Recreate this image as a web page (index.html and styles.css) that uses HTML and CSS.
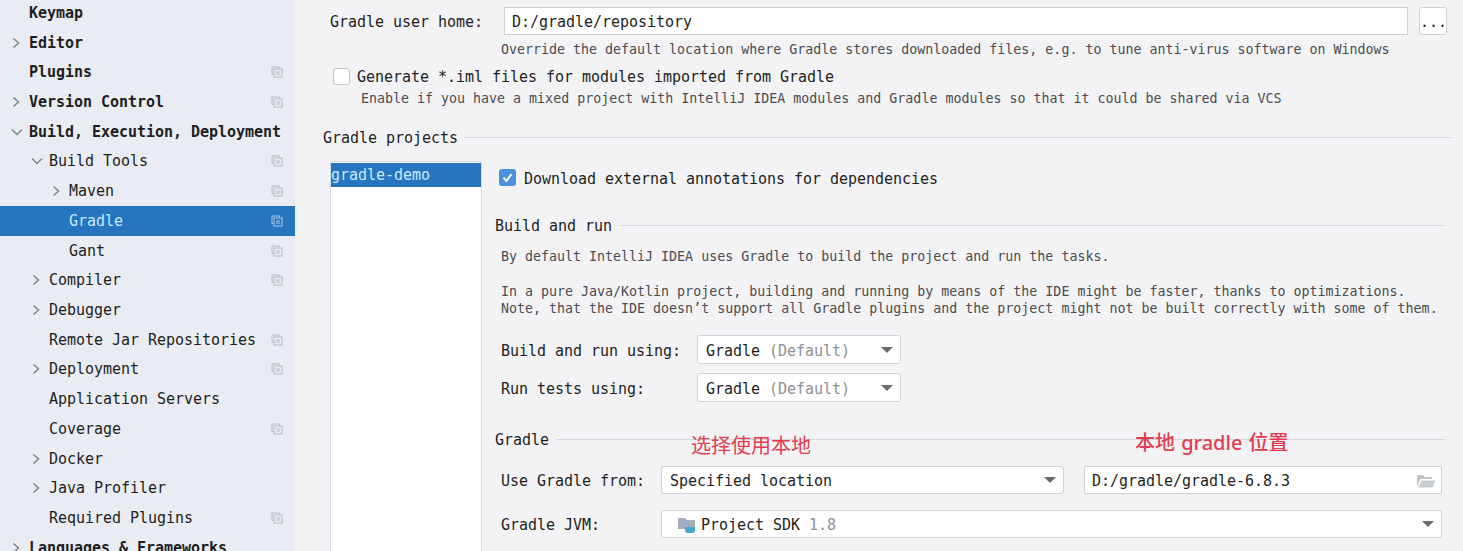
FILE: index.html
```html
<!DOCTYPE html>
<html lang="en">
<head>
<meta charset="UTF-8">
<meta name="viewport" content="width=device-width, initial-scale=1.0">
<title>Settings - Gradle</title>
<link rel="stylesheet" href="styles.css">
</head>
<body>

<svg class="defs" width="0" height="0">
    <symbol id="scope" viewBox="0 0 12 12">
        <path d="M2.5 8.5H1V1h7.5v1.5" fill="none" stroke="currentColor"/>
        <rect x="3" y="3" width="8" height="8" fill="none" stroke="currentColor"/>
        <path d="M5 6h4M5 8h4" stroke="currentColor"/>
    </symbol>
    <symbol id="right" viewBox="0 0 10 12">
        <path d="M2.5 1.5 7.5 6l-5 4.5" fill="none" stroke="currentColor" stroke-width="1.5"/>
    </symbol>
    <symbol id="down" viewBox="0 0 12 10">
        <path d="M1 2.5 6 7.5l5-5" fill="none" stroke="currentColor" stroke-width="1.5"/>
    </symbol>
</svg>

<div id="sidebar">
    <div class="row top"><span class="arrow"></span>Keymap</div>
    <div class="row top"><span class="arrow"><svg width="10" height="12"><use href="#right"/></svg></span>Editor</div>
    <div class="row top"><span class="arrow"></span>Plugins<svg class="scope" width="12" height="12"><use href="#scope"/></svg></div>
    <div class="row top"><span class="arrow"><svg width="10" height="12"><use href="#right"/></svg></span>Version Control<svg class="scope" width="12" height="12"><use href="#scope"/></svg></div>
    <div class="row top"><span class="arrow"><svg width="12" height="10"><use href="#down"/></svg></span>Build, Execution, Deployment</div>
    <div class="row depth1"><span class="arrow"><svg width="12" height="10"><use href="#down"/></svg></span>Build Tools<svg class="scope" width="12" height="12"><use href="#scope"/></svg></div>
    <div class="row depth2"><span class="arrow"><svg width="10" height="12"><use href="#right"/></svg></span>Maven<svg class="scope" width="12" height="12"><use href="#scope"/></svg></div>
    <div class="row depth2 selected"><span class="arrow"></span>Gradle<svg class="scope" width="12" height="12"><use href="#scope"/></svg></div>
    <div class="row depth2"><span class="arrow"></span>Gant<svg class="scope" width="12" height="12"><use href="#scope"/></svg></div>
    <div class="row depth1"><span class="arrow"><svg width="10" height="12"><use href="#right"/></svg></span>Compiler<svg class="scope" width="12" height="12"><use href="#scope"/></svg></div>
    <div class="row depth1"><span class="arrow"><svg width="10" height="12"><use href="#right"/></svg></span>Debugger</div>
    <div class="row depth1"><span class="arrow"></span>Remote Jar Repositories<svg class="scope" width="12" height="12"><use href="#scope"/></svg></div>
    <div class="row depth1"><span class="arrow"><svg width="10" height="12"><use href="#right"/></svg></span>Deployment<svg class="scope" width="12" height="12"><use href="#scope"/></svg></div>
    <div class="row depth1"><span class="arrow"></span>Application Servers</div>
    <div class="row depth1"><span class="arrow"></span>Coverage<svg class="scope" width="12" height="12"><use href="#scope"/></svg></div>
    <div class="row depth1"><span class="arrow"><svg width="10" height="12"><use href="#right"/></svg></span>Docker</div>
    <div class="row depth1"><span class="arrow"><svg width="10" height="12"><use href="#right"/></svg></span>Java Profiler</div>
    <div class="row depth1"><span class="arrow"></span>Required Plugins<svg class="scope" width="12" height="12"><use href="#scope"/></svg></div>
    <div class="row top"><span class="arrow"><svg width="10" height="12"><use href="#right"/></svg></span>Languages &amp; Frameworks</div>
</div>

<div id="main">
    <div class="homeRow">
        <div class="homeLabel label">Gradle user home:</div>
        <div class="field homeField">D:/gradle/repository</div>
        <div class="browseBtn">...</div>
    </div>
    <div class="hint homeHint">Override the default location where Gradle stores downloaded files, e.g. to tune anti-virus software on Windows</div>

    <div class="checkRow imlRow">
        <span class="checkbox"></span>
        <span class="label">Generate *.iml files for modules imported from Gradle</span>
    </div>
    <div class="hint imlHint">Enable if you have a mixed project with IntelliJ IDEA modules and Gradle modules so that it could be shared via VCS</div>

    <div class="sectionTitle projectsTitle">Gradle projects</div>

    <div class="projects">
        <div class="projectList">
            <div class="projectItem">gradle-demo</div>
        </div>

        <div class="detail">
            <div class="checkRow downloadRow">
                <span class="checkbox checked">
                    <svg width="17" height="17" viewBox="0 0 17 17"><path d="M4.5 8.5 7.5 12l5-7" fill="none" stroke="#fff" stroke-width="2"/></svg>
                </span>
                <span class="label">Download external annotations for dependencies</span>
            </div>

            <div class="sectionTitle buildTitle">Build and run</div>
            <div class="hint buildText">By default IntelliJ IDEA uses Gradle to build the project and run the tasks.<br><br>In a pure Java/Kotlin project, building and running by means of the IDE might be faster, thanks to optimizations.<br>Note, that the IDE doesn&rsquo;t support all Gradle plugins and the project might not be built correctly with some of them.</div>

            <div class="buildForm">
                <div class="label">Build and run using:</div>
                <div class="select tall">Gradle&nbsp;<span class="muted">(Default)</span><span class="caret"></span></div>
                <div class="label">Run tests using:</div>
                <div class="select tall">Gradle&nbsp;<span class="muted">(Default)</span><span class="caret"></span></div>
            </div>

            <div class="sectionTitle gradleTitle">Gradle</div>

            <div class="gradleForm">
                <div class="label">Use Gradle from:</div>
                <div class="select">Specified location<span class="caret"></span></div>
                <div class="field pathField">D:/gradle/gradle-6.8.3
                    <svg class="openFolder" width="20" height="14" viewBox="0 0 20 14"><path d="M1 13V1h6l2 2h7v2H4.5L1 13Z" fill="#c2c6cc"/><path d="M5.5 6.5H19.5L16.5 13.5H2.5Z" fill="#c9cdd2"/></svg>
                </div>
                <div class="label">Gradle JVM:</div>
                <div class="select jvm">
                    <svg class="sdkIcon" width="18" height="18" viewBox="0 0 18 18"><path d="M0 2h7l2 2h8v9H0Z" fill="#a3afbc"/><path d="M7 11h10v3a3 3 0 0 1-3 3h-4a3 3 0 0 1-3-3Z" fill="#3fa9d0"/></svg>
                    Project SDK&nbsp;<span class="muted">1.8</span><span class="caret"></span>
                </div>
            </div>
        </div>
    </div>

    <div class="note noteLocal">选择使用本地</div>
    <div class="note notePath">本地 gradle 位置</div>
</div>

</body>
</html>
```

FILE: styles.css
```css
body {
    margin: 0;
    height: 551px;
    overflow: hidden;
    display: flex;
    background-color: #f3f3f6;
    color: #1e1e1e;
    font-family: "DejaVu Sans Mono", "Liberation Mono", monospace;
    font-size: 15px;
    letter-spacing: -0.03px;
}
.defs {
    position: absolute;
}
/* DejaVu sits a pixel higher than the IDE font */
.label {
    padding-top: 2px;
}

/* Left tree */
#sidebar {
    width: 295px;
    flex-shrink: 0;
    margin-top: -2px;
    background-color: #e9ecf3;
}
.row {
    display: flex;
    align-items: center;
    height: 29.72px;
    white-space: nowrap;
}
.row.top {
    padding-left: 9px;
    font-weight: bold;
}
.row.depth1 {
    padding-left: 29px;
}
.row.depth2 {
    padding-left: 49px;
}
.row.selected {
    background-color: #2675bf;
    color: #c8e8ff;
}
.arrow {
    width: 20px;
    flex-shrink: 0;
    display: flex;
    padding-left: 2px;
    box-sizing: border-box;
    color: #80858c;
}
.scope {
    margin-left: auto;
    margin-right: 12px;
    color: #b4bac2;
}
.row.selected .scope {
    color: #a9c8e6;
}

/* Right side */
#main {
    flex: 1;
    min-width: 0;
    position: relative;
    padding-right: 12px;
}
.homeRow {
    display: flex;
    align-items: center;
    margin-top: 7px;
    margin-left: 35px;
    margin-right: 4px;
}
.homeLabel {
    width: 174px;
    flex-shrink: 0;
}
.field {
    height: 28px;
    box-sizing: border-box;
    display: flex;
    align-items: center;
    padding-left: 7px;
    padding-top: 2px;
    background-color: white;
    border: 1px solid #cfcfd4;
    white-space: nowrap;
}
.homeField {
    flex: 1;
    min-width: 0;
}
.browseBtn {
    width: 28px;
    height: 28px;
    flex-shrink: 0;
    margin-left: 11px;
    box-sizing: border-box;
    text-align: center;
    line-height: 28px;
    background-color: white;
    border: 1px solid #cfcfd4;
    border-radius: 3px;
}
.hint {
    font-size: 13.3px;
    letter-spacing: 0;
    color: #4c4c50;
    white-space: nowrap;
}
.homeHint {
    margin-top: 6px;
    margin-left: 206px;
    line-height: 18px;
}
.checkRow {
    display: flex;
    align-items: center;
    white-space: nowrap;
}
.imlRow {
    margin-top: 8px;
    margin-left: 38px;
    height: 18px;
}
.checkbox {
    width: 17px;
    height: 17px;
    flex-shrink: 0;
    margin-right: 7px;
    box-sizing: border-box;
    background-color: white;
    border: 1px solid #c4c4c8;
    border-radius: 3px;
}
.checkbox.checked {
    margin-right: 8px;
    background-color: #4a90dc;
    border: none;
}
.checkbox.checked svg {
    display: block;
}
.imlHint {
    margin-top: 5px;
    margin-left: 66px;
    line-height: 18px;
}
.sectionTitle {
    display: flex;
    align-items: center;
    gap: 7px;
    height: 18px;
    white-space: nowrap;
}
.sectionTitle::after {
    content: "";
    flex: 1;
    height: 1px;
    margin-bottom: 2px;
    background-color: #d6d6dc;
}
.projectsTitle {
    margin-top: 21px;
    margin-left: 28px;
}

/* Project list and its details */
.projects {
    display: flex;
    margin-top: 14px;
    margin-left: 35px;
    height: 391px;
}
.projectList {
    width: 152px;
    flex-shrink: 0;
    box-sizing: border-box;
    padding-top: 1px;
    background-color: white;
    border: 1px solid #d3dbe3;
    border-bottom: none;
}
.projectItem {
    height: 24px;
    line-height: 24px;
    background-color: #2675bf;
    color: #c8e8ff;
}
.detail {
    flex: 1;
    min-width: 0;
    margin-left: 13px;
    margin-right: 6px;
}
.downloadRow {
    margin-top: 8px;
    margin-left: 4px;
    height: 17px;
}
.buildTitle {
    margin-top: 31px;
}
.buildText {
    margin-top: 13px;
    margin-left: 6px;
    line-height: 17.4px;
}
.buildForm {
    display: grid;
    grid-template-columns: 196px 204px;
    align-items: center;
    row-gap: 9px;
    margin-top: 17.4px;
    margin-left: 6px;
}
.select {
    height: 28px;
    box-sizing: border-box;
    display: flex;
    align-items: center;
    padding-left: 8px;
    padding-top: 2px;
    background-color: white;
    border: 1px solid #d2d2d8;
    border-radius: 3px;
    white-space: nowrap;
}
.select.tall {
    height: 29px;
}
.muted {
    color: #8f8f94;
}
.caret {
    margin-left: auto;
    margin-right: 7px;
    margin-bottom: 2px;
    width: 0;
    height: 0;
    border-left: 6px solid transparent;
    border-right: 6px solid transparent;
    border-top: 6px solid #6a6a70;
}
.gradleTitle {
    margin-top: 29px;
}
.gradleForm {
    display: grid;
    grid-template-columns: 160px 403px 378px;
    align-items: center;
    row-gap: 16px;
    margin-top: 17px;
    margin-left: 6px;
}
.pathField {
    justify-content: space-between;
    margin-left: 20px;
    padding-right: 5px;
    border-radius: 2px;
}
.jvm {
    grid-column: 2 / 4;
    padding-left: 16px;
}
.sdkIcon {
    margin-right: 5px;
    flex-shrink: 0;
}

/* Red notes drawn on top of the screenshot */
.note {
    position: absolute;
    font-family: "Noto Sans", "Noto Sans CJK SC", sans-serif;
    font-size: 20px;
    line-height: 28px;
    letter-spacing: 0;
    color: #e23d50;
    white-space: nowrap;
}
.noteLocal {
    left: 396px;
    top: 432px;
}
.notePath {
    left: 840px;
    top: 429px;
    font-weight: 500;
    word-spacing: 1px;
}
```
